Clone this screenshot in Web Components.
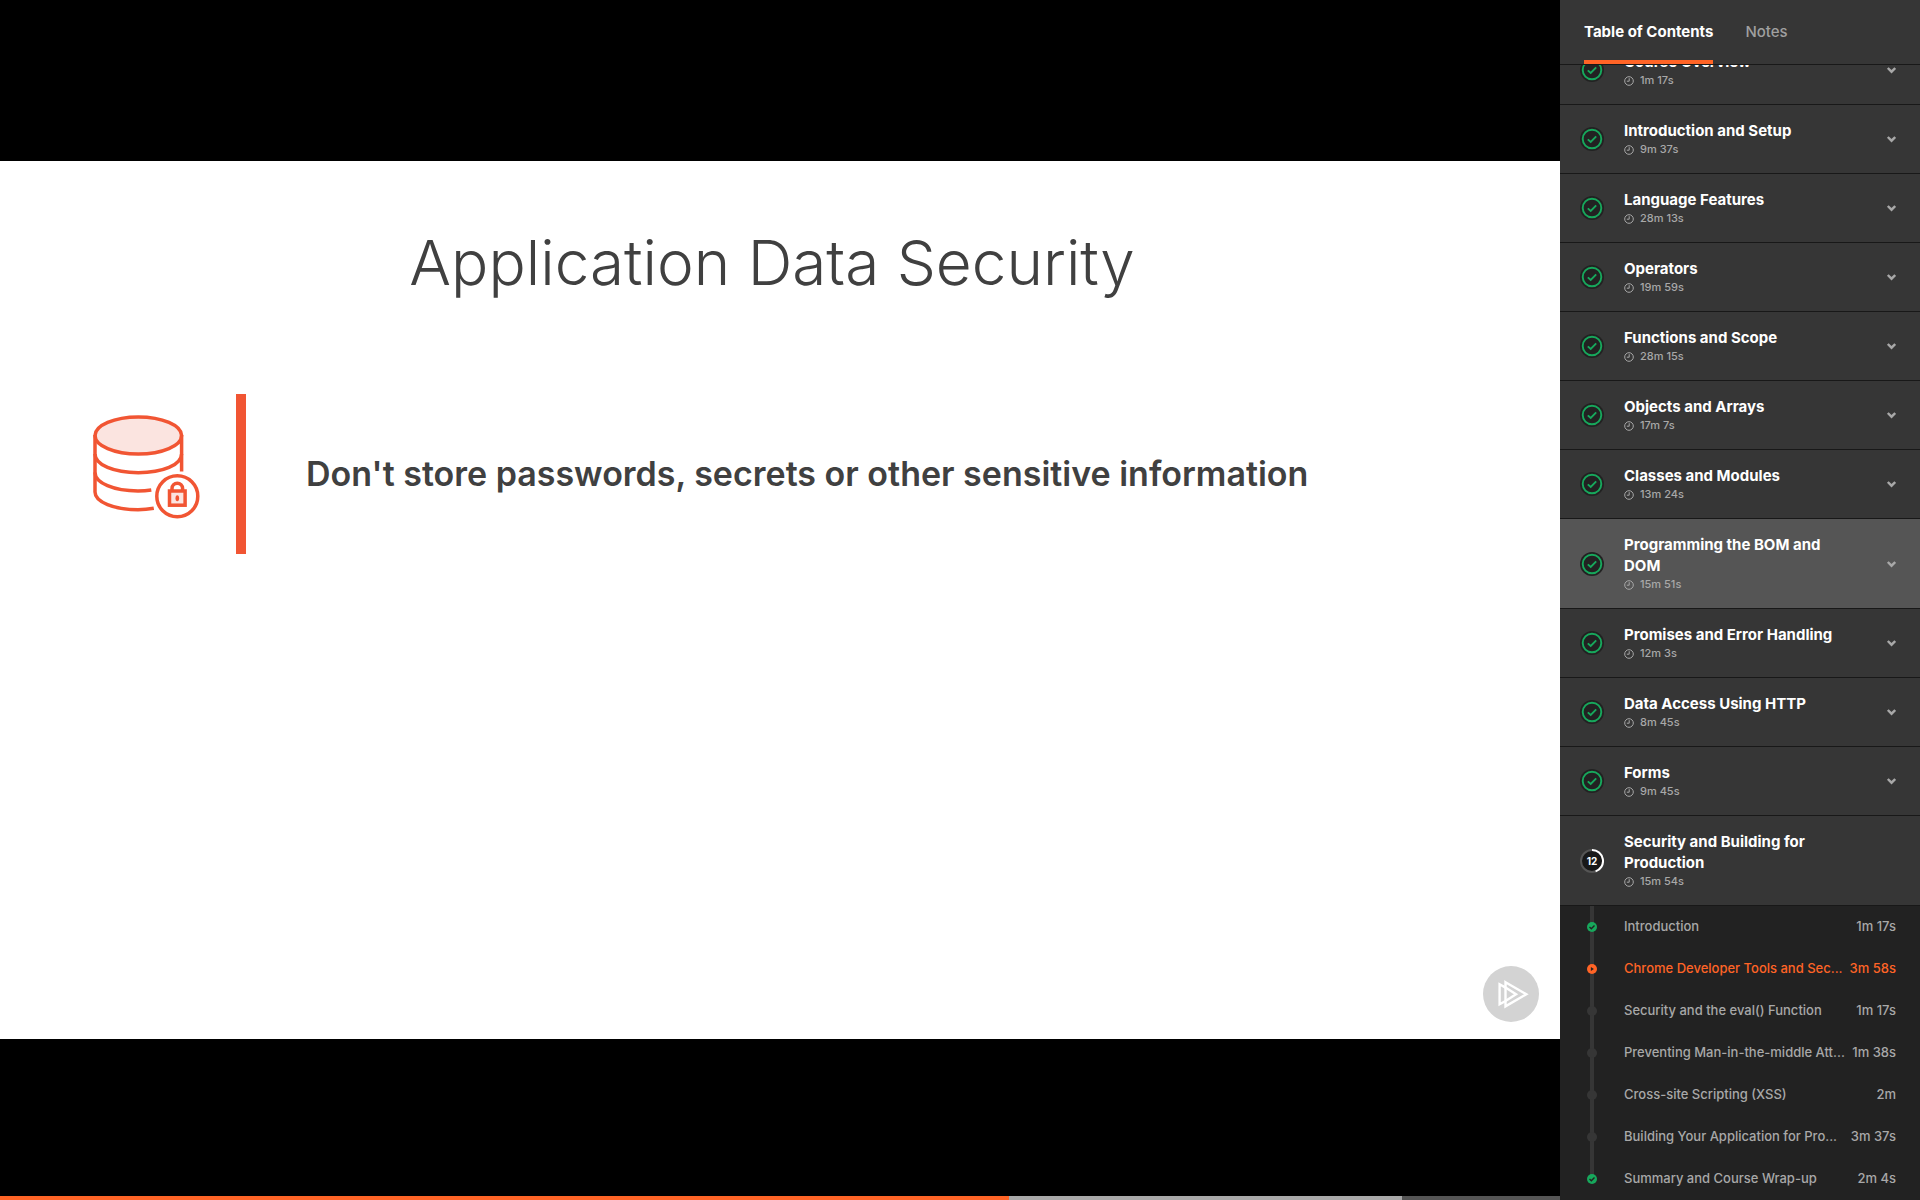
<!DOCTYPE html>
<html lang="en">
<head>
<meta charset="utf-8">
<title>Course player</title>
<style>
  html, body { height: 100%; margin: 0; background: #000; }
  body { font-family: Inter, "Open Sans", sans-serif; }
</style>
</head>
<body>
<course-player>
  <video-stage slot="stage">
    <lesson-slide heading="Application Data Security">Don't store passwords, secrets or other sensitive information</lesson-slide>
  </video-stage>
  <toc-panel slot="panel">
    <toc-module time="1m 17s">Course Overview</toc-module>
    <toc-module time="9m 37s">Introduction and Setup</toc-module>
    <toc-module time="28m 13s">Language Features</toc-module>
    <toc-module time="19m 59s">Operators</toc-module>
    <toc-module time="28m 15s">Functions and Scope</toc-module>
    <toc-module time="17m 7s">Objects and Arrays</toc-module>
    <toc-module time="13m 24s">Classes and Modules</toc-module>
    <toc-module time="15m 51s" highlighted>Programming the BOM and DOM</toc-module>
    <toc-module time="12m 3s">Promises and Error Handling</toc-module>
    <toc-module time="8m 45s">Data Access Using HTTP</toc-module>
    <toc-module time="9m 45s">Forms</toc-module>
    <toc-module time="15m 54s" number="12">Security and Building for Production</toc-module>
    <toc-lesson time="1m 17s" state="done">Introduction</toc-lesson>
    <toc-lesson time="3m 58s" state="playing">Chrome Developer Tools and Sec...</toc-lesson>
    <toc-lesson time="1m 17s">Security and the eval() Function</toc-lesson>
    <toc-lesson time="1m 38s">Preventing Man-in-the-middle Att...</toc-lesson>
    <toc-lesson time="2m">Cross-site Scripting (XSS)</toc-lesson>
    <toc-lesson time="3m 37s">Building Your Application for Pro...</toc-lesson>
    <toc-lesson time="2m 4s" state="done" last>Summary and Course Wrap-up</toc-lesson>
  </toc-panel>
</course-player>

<script>
const define = (name, render) => customElements.define(name, class extends HTMLElement {
  connectedCallback() {
    if (this.shadowRoot) return;
    this.attachShadow({ mode: 'open' }).innerHTML = render(this);
  }
});

define('course-player', () => `
  <style>
    :host { display: flex; height: 100vh; background: #000; }
    main { flex: 1; min-width: 0; display: flex; }
    aside { flex: none; width: 360px; display: flex; }
    ::slotted(*) { flex: 1; min-width: 0; }
  </style>
  <main><slot name="stage"></slot></main>
  <aside><slot name="panel"></slot></aside>`);

define('video-stage', () => `
  <style>
    :host { display: grid; grid-template-rows: 4px 1fr 4px; }
    .frame { grid-row: 2; display: flex; align-items: center; min-height: 0; }
    ::slotted(*) { flex: 1; min-width: 0; }
    input {
      grid-row: 3; appearance: none; display: block; width: 100%; height: 4px; margin: 0; cursor: pointer;
      background: linear-gradient(to right, #ff6426 64.7%, #a8a8a8 64.7% 89.9%, #555 89.9%);
    }
    input::-webkit-slider-thumb { appearance: none; width: 4px; height: 4px; opacity: 0; }
  </style>
  <div class="frame"><slot></slot></div>
  <input type="range" min="0" max="238" value="154" aria-label="Playback position">`);

define('lesson-slide', el => `
  <style>
    :host { display: block; position: relative; box-sizing: border-box; aspect-ratio: 16 / 9; padding: 66px 16px 0 0; background: #fff; color: #404040; }
    h1 { margin: 0 0 95px; font-size: 62px; line-height: 72px; font-weight: 300; text-align: center; }
    .point { display: flex; align-items: center; gap: 32px; padding-left: 92px; }
    .icon { display: block; flex: none; width: 112px; height: 160px; }
    p { flex: 1; box-sizing: border-box; display: flex; align-items: center; min-height: 160px; margin: 0; padding-left: 60px;
        border-left: 10px solid #f15533; font-size: 34px; line-height: 40px; font-weight: 600; }
    .logo { position: absolute; right: 21px; bottom: 17px; width: 56px; height: 56px; }
  </style>
  <h1>${el.getAttribute('heading')}</h1>
  <div class="point">
    <svg class="icon" viewBox="0 0 112 160" fill="none" stroke="#f15533" stroke-width="3.5" aria-hidden="true">
      <ellipse cx="46.3" cy="41.5" rx="43.3" ry="18.6" fill="#fbe4e0"/>
      <path d="M3 41V98C3 108 22 115.7 46 115.7Q54 115.7 61.8 114.3"/>
      <path d="M3 60C3 71 22 78.7 46.3 78.7S89.6 71 89.6 60"/>
      <path d="M3 78.5C3 89 22 97 46 97Q53 97 59.3 96"/>
      <path d="M89.6 41V77.5"/>
      <circle cx="85.3" cy="102.3" r="20.5" fill="#fff"/>
      <rect x="77.5" y="97" width="15.6" height="14.2" fill="#fbe4e0"/>
      <path d="M80 96.5V94.5a5.3 5.3 0 0 1 10.6 0V96.5"/>
      <ellipse cx="85.3" cy="104.3" rx="1.8" ry="3" fill="#f15533" stroke="none"/>
    </svg>
    <p><span><slot></slot></span></p>
  </div>
  <svg class="logo" viewBox="0 0 56 56" fill="none" stroke="#fff" stroke-width="2.4" aria-hidden="true">
    <circle cx="28" cy="28" r="28" fill="#d3d3d3" stroke="none"/>
    <path d="M22.5 16.2L43.3 28.3L22.5 40.4Z"/>
    <path d="M22.5 21.6L16.6 18.3V38.3L22.5 35M22.5 21.6L33 28.3L22.5 35"/>
  </svg>`);

define('toc-panel', () => `
  <style>
    :host { display: flex; flex-direction: column; background: #222; font-family: inherit; }
    nav { flex: none; display: flex; gap: 32px; height: 64px; padding: 0 24px; background: #363636; border-bottom: 1px solid #181818; }
    button { padding: 4px 0 0; border: 0; border-bottom: 4px solid transparent; background: none; color: #a0a0a0; font: 500 15px/20px Inter, sans-serif; cursor: pointer; }
    button[aria-selected="true"] { border-color: #ff6426; color: #fff; font-weight: 700; }
    .list { flex: 1; min-height: 0; overflow-y: auto; scrollbar-width: none; }
  </style>
  <nav role="tablist">
    <button role="tab" aria-selected="true">Table of Contents</button>
    <button role="tab" aria-selected="false">Notes</button>
  </nav>
  <div class="list"><slot></slot></div>`);

define('toc-module', el => {
  const number = el.getAttribute('number');
  const badge = number
    ? `<span class="badge"><svg viewBox="0 0 24 24" fill="none" stroke-width="2" aria-hidden="true">
        <circle cx="12" cy="12" r="11" fill="#181818" stroke="#555"/>
        <path d="M12 1A11 11 0 0 1 15.6 22.4" stroke="#fff"/></svg><b>${number}</b></span>`
    : `<span class="badge"><svg viewBox="0 0 24 24" fill="none" aria-hidden="true">
        <circle cx="12" cy="12" r="12" fill="#222"/>
        <circle cx="12" cy="12" r="9.3" stroke="#17a85c" stroke-width="1.9"/>
        <path d="M7.8 12.4L10.7 15L16.2 9.3" stroke="#17a85c" stroke-width="1.9"/></svg></span>`;
  return `
  <style>
    :host { display: block; border-bottom: 1px solid #181818; background: #363636; }
    :host([highlighted]) { background: #555; }
    button { display: flex; align-items: center; box-sizing: border-box; width: 100%; padding: 15px 24px 15px 20px; border: 0; background: none; color: #fff; font-family: inherit; text-align: left; cursor: pointer; }
    .badge { flex: none; display: grid; place-items: center; width: 24px; height: 24px; margin-right: 20px; }
    .badge > * { grid-area: 1 / 1; }
    .badge svg { width: 24px; height: 24px; }
    .badge b { font-size: 10px; line-height: 12px; font-weight: 700; }
    .text { flex: 1; padding-right: 40px; }
    .title { display: block; font-size: 15px; line-height: 21px; font-weight: 700; }
    .time { display: flex; align-items: center; gap: 6px; font-size: 11px; line-height: 17px; font-weight: 500; color: #a8a8a8; }
    .time svg { width: 10px; height: 10px; }
    .chevron { flex: none; width: 10px; height: 8px; }
  </style>
  <button type="button" aria-expanded="${!!number}">
    ${badge}
    <span class="text">
      <span class="title"><slot></slot></span>
      <span class="time"><svg viewBox="0 0 10 10" fill="none" stroke="#a8a8a8" aria-hidden="true"><circle cx="5" cy="5" r="4.3"/><path d="M5.2 2.2V5.2H2.8"/></svg>${el.getAttribute('time')}</span>
    </span>
    <svg class="chevron" viewBox="0 0 10 8" fill="none" stroke="#a8a8a8" stroke-width="2.4" aria-hidden="true">${number ? '' : '<path d="M1.8 2L5.5 5.7L9.2 2"/>'}</svg>
  </button>`;
});

define('toc-lesson', el => {
  const state = el.getAttribute('state');
  const dot = state === 'done'
    ? '<circle cx="5" cy="5" r="5" fill="#17a85c"/><path d="M2.5 5.1L4.3 6.7L7.5 3.5" fill="none" stroke="#222" stroke-width="1.4"/>'
    : state === 'playing'
    ? '<circle cx="5" cy="5" r="5" fill="#ff6426"/><path d="M3.9 3L6.9 5L3.9 7Z" fill="#222"/>'
    : '<circle cx="5" cy="5" r="5" fill="#363636"/>';
  return `
  <style>
    :host { display: block; background: #222; color: #a8a8a8; }
    :host([state="playing"]) { color: #ff6426; }
    a { display: flex; align-items: center; height: 42px; padding: 0 24px 0 20px; color: inherit; text-decoration: none; font-size: 13px; line-height: 20px; font-weight: 500; }
    .rail { flex: none; display: grid; place-items: center; align-self: stretch; width: 24px; margin-right: 20px;
            background: linear-gradient(#363636, #363636) center top / 4px 100% no-repeat; }
    :host([last]) .rail { background-size: 4px 50%; }
    svg { width: 10px; height: 10px; }
    .title, .time { padding-bottom: 2px; }
    .title { flex: 1; min-width: 0; white-space: nowrap; overflow: hidden; text-overflow: ellipsis; }
    .time { flex: none; margin-left: 4px; }
  </style>
  <a href="#"${state === 'playing' ? ' aria-current="true"' : ''}>
    <span class="rail"><svg viewBox="0 0 10 10" aria-hidden="true">${dot}</svg></span>
    <span class="title"><slot></slot></span>
    <span class="time">${el.getAttribute('time')}</span>
  </a>`;
});

/* Open the list at its end, where the current module is. */
const list = document.querySelector('toc-panel').shadowRoot.querySelector('.list');
list.scrollTop = list.scrollHeight;
</script>
</body>
</html>
